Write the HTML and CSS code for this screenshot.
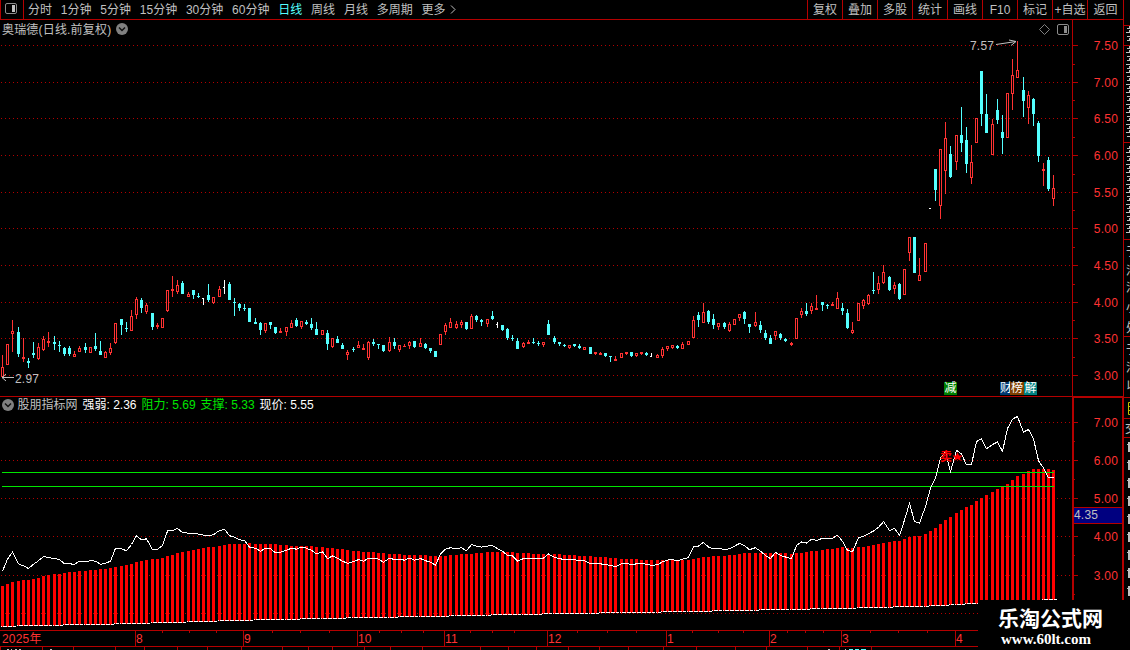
FILE: index.html
```html
<!DOCTYPE html>
<html lang="zh-CN">

<head>
    <meta charset="UTF-8">
    <meta name="viewport" content="width=device-width, initial-scale=1.0">
    <title>奥瑞德 日线</title>
    <link rel="stylesheet" href="styles.css">
</head>

<body>
    <div class="app">
        <div class="toolbar">
            <div class="side-btn">
                <svg width="12" height="11" viewBox="0 0 12 11">
                    <rect x="0.5" y="0.5" width="11" height="10" rx="1.5" fill="none" stroke="#8c8c8c" />
                    <rect x="7" y="2" width="3" height="7" fill="#c0c0c0" />
                </svg>
            </div>
            <div class="periods">
                <span>分时</span>
                <span>1分钟</span>
                <span>5分钟</span>
                <span>15分钟</span>
                <span>30分钟</span>
                <span>60分钟</span>
                <span class="on">日线</span>
                <span>周线</span>
                <span>月线</span>
                <span>多周期</span>
                <span>更多<svg class="more" width="6" height="9" viewBox="0 0 6 9"><path d="M1 0.5L5 4.5L1 8.5" fill="none" stroke="#c0c0c0" /></svg></span>
            </div>
            <div class="tools">
                <span>复权</span>
                <span>叠加</span>
                <span>多股</span>
                <span>统计</span>
                <span>画线</span>
                <span>F10</span>
                <span>标记</span>
                <span>+自选</span>
                <span class="last">返回</span>
            </div>
        </div>

        <div class="panel kline">
            <svg id="kline" width="1130" height="377" viewBox="0 20 1130 377"></svg>
            <div class="title">
                <span class="stock">奥瑞德(日线.前复权)</span>
                <svg class="drop" width="12" height="12" viewBox="0 0 12 12">
                    <circle cx="6" cy="6" r="6" fill="#808080" />
                    <path d="M3 4.5L6 7.5L9 4.5" fill="none" stroke="#101010" stroke-width="1.5" />
                </svg>
            </div>
            <div class="marks">
                <span class="mark green">减</span>
                <span class="mark navy">财</span>
                <span class="mark brown">榜</span>
                <span class="mark teal">解</span>
            </div>
        </div>

        <div class="panel indicator">
            <svg id="indicator" width="1130" height="253" viewBox="0 397 1130 253"></svg>
            <div class="title">
                <svg class="drop" width="12" height="12" viewBox="0 0 12 12">
                    <circle cx="6" cy="6" r="6" fill="#808080" />
                    <path d="M3 4.5L6 7.5L9 4.5" fill="none" stroke="#101010" stroke-width="1.5" />
                </svg>
                <span>股朋指标网</span>
                <span class="white">强弱: 2.36</span>
                <span class="lime">阻力: 5.69</span>
                <span class="lime">支撑: 5.33</span>
                <span class="white">现价: 5.55</span>
            </div>
            <div class="logo">
                <p class="name">乐淘公式网</p>
                <p class="url">www.60lt.com</p>
            </div>
        </div>
    </div>
    <script src="chart.js"></script>
</body>

</html>
```
FILE: styles.css
```css
* {
    padding: 0;
    margin: 0;
    box-sizing: border-box;
}

body {
    background: #000;
    color: #c0c0c0;
    font: 12px/14px "Liberation Sans", "Noto Sans CJK SC", sans-serif;
    overflow: hidden;
}

svg {
    display: block;
}

.app {
    width: 1130px;
    height: 650px;
    display: flex;
    flex-direction: column;
}

.toolbar {
    display: flex;
    width: 1124px;
    height: 20px;
    border-bottom: 1px solid #b40000;
    border-right: 1px solid #b40000;
    white-space: nowrap;
}

.side-btn {
    width: 24px;
    padding: 3px 0 0 4px;
    border-left: 1px solid #b40000;
    border-right: 1px solid #b40000;
}

.periods {
    display: flex;
    gap: 8.8px;
    padding: 3px 0 0 4px;
}

.periods .on {
    color: #54ffff;
}

.more {
    display: inline-block;
    margin-left: 4px;
}

.tools {
    display: flex;
    margin-left: auto;
}

.tools span {
    width: 35px;
    padding-top: 3px;
    border-left: 1px solid #b40000;
    text-align: center;
}

.tools .last {
    width: 36px;
}

.panel {
    position: relative;
}

.kline {
    height: 377px;
}

.indicator {
    height: 253px;
}

.title {
    position: absolute;
    left: 2px;
    top: 3px;
    display: flex;
    gap: 5px;
    white-space: nowrap;
}

.stock {
    letter-spacing: 0.18px;
}

.indicator .title {
    top: 1px;
}

.drop {
    margin-top: 1px;
}

.kline .drop {
    margin-top: 0;
}

.indicator .title .drop {
    margin-right: -1.5px;
}

.white {
    color: #fff;
}

.lime {
    color: #00e600;
}

.marks {
    position: absolute;
    left: 944px;
    top: 362px;
    display: flex;
}

.mark {
    width: 13px;
    height: 13px;
    color: #fff;
    line-height: 13px;
    text-align: center;
}

.green {
    background: #008000;
    margin-right: 43px;
}

.navy {
    width: 10px;
    background: #003870;
    text-align: left;
}

.brown {
    width: 14px;
    background: #804000;
}

.teal {
    background: #008080;
}

.logo {
    position: absolute;
    left: 978px;
    top: 203px;
    width: 152px;
    height: 50px;
    padding: 7px 0 0 20px;
    background: #000;
    color: #fff;
}

.logo .name {
    font: bold 21px/21px "Noto Sans CJK SC", sans-serif;
}

.logo .url {
    padding: 3px 0 0 3px;
    font: bold 15px/16px "Liberation Serif", serif;
}

text {
    font: 12px "Liberation Sans", "Noto Sans CJK SC", sans-serif;
}

.price {
    letter-spacing: 0.2px;
}

.sell {
    font-weight: bold;
}
```
FILE: chart.js
```js
var NS = "http://www.w3.org/2000/svg";
var RED = "#ff3232";
var CYAN = "#54ffff";
var LINE = "#b40000";

// type, high, body top, body bottom, low (screen y)
var candles = "r355,367,377,377 r344,344,365,365 r320,331,334,352 c327,332,354,357 r338,357,359,362 c358,361,363,368 c342,353,355,358 r343,347,359,360 r336,339,350,351 r332,341,343,347 " +
    "c336,342,344,350 c341,345,346,352 c347,348,354,356 c346,348,354,356 r351,354,357,357 r346,348,352,352 c343,347,350,353 r347,347,353,353 c333,346,349,351 c341,351,355,355 " +
    "r351,352,358,358 r343,348,353,355 r323,323,343,344 c319,319,325,335 c322,328,329,332 r310,316,331,331 r297,299,315,319 c298,300,308,313 r303,305,312,314 c313,313,327,330 " +
    "r323,325,327,329 r318,318,328,328 r290,290,311,312 r276,289,291,297 r280,285,292,294 c281,283,294,294 r292,294,297,297 c290,290,295,299 c293,296,297,298 w298,298,299,305 " +
    "c284,295,300,302 r297,297,303,304 r286,289,297,297 w280,287,288,294 c282,284,300,300 c298,302,303,316 c303,304,308,311 c304,308,309,311 c308,308,322,322 c318,322,324,324 " +
    "c322,323,330,335 r323,323,331,333 c322,322,325,329 c327,327,333,334 r328,331,333,333 r327,327,332,336 r320,323,328,328 c318,320,326,327 r321,321,327,329 c320,322,324,325 " +
    "c318,324,328,330 c322,329,335,335 r330,330,335,335 c330,333,344,350 r338,338,347,348 c336,339,343,343 c343,345,349,349 r350,352,355,360 c347,349,350,352 r341,345,348,348 " +
    "r344,348,350,350 r341,342,358,360 c339,342,344,346 c344,344,345,349 c345,345,351,352 r337,342,351,352 c338,342,346,349 r345,345,350,352 r344,346,347,347 r341,342,346,349 " +
    "c341,341,347,348 r338,343,347,347 c343,344,348,349 c348,348,351,353 c351,351,357,357 r334,334,345,345 r323,325,332,335 r318,322,328,328 r321,324,328,329 r320,322,325,328 " +
    "c322,322,329,330 r314,316,329,329 c315,316,320,322 c319,320,322,326 r319,319,324,327 c311,316,319,320 w322,324,325,328 c325,325,330,331 c328,329,338,340 c335,338,339,341 " +
    "c338,341,349,349 r342,343,347,348 r340,342,344,344 c338,342,343,344 c341,343,344,346 r342,342,345,347 c320,324,335,335 c336,338,342,344 c342,342,344,346 c344,345,346,347 " +
    "r345,345,348,349 c344,344,346,347 c344,346,348,349 r347,347,350,350 c347,347,354,354 r352,352,354,355 r352,353,355,355 c353,353,356,357 c356,356,357,362 r356,359,361,361 " +
    "r353,353,358,358 r352,352,354,355 c352,352,356,357 r353,353,356,357 r352,352,354,355 c352,353,355,356 w353,356,357,357 r354,355,358,358 r347,349,356,358 r346,346,349,351 " +
    "r345,345,348,349 c345,346,348,349 r342,344,349,349 r341,341,345,345 r316,320,338,338 c312,315,320,327 r303,312,323,323 c310,311,322,324 c314,319,325,329 r323,323,327,330 " +
    "c322,323,327,329 r322,324,331,332 r319,319,325,325 r314,314,318,321 c311,312,319,324 c324,324,327,333 r312,322,326,327 c321,325,330,333 c330,333,338,340 c335,338,344,344 " +
    "r331,331,336,340 c333,334,338,340 c338,339,341,342 r342,343,345,346 r318,318,339,339 r308,311,315,318 c303,311,314,316 r303,306,311,314 r295,308,310,310 c302,302,305,311 " +
    "c304,305,306,309 r302,304,306,306 r292,298,309,309 c303,308,311,315 c309,313,328,329 r322,330,333,334 r303,303,321,321 r299,300,306,309 r294,295,304,305 c272,290,291,294 " +
    "r276,283,290,294 r265,272,283,284 c276,277,290,291 r282,285,289,294 c283,284,299,300 r269,269,295,295 r237,237,253,261 c237,237,273,273 r258,275,281,281 r243,243,272,272 " +
    "w208,208,209,209 c169,169,190,201 r149,149,206,219 r122,138,171,194 c146,154,177,178 r135,135,162,170 c107,135,143,152 c127,140,164,173 r145,162,178,184 r118,118,143,143 " +
    "c71,71,114,126 c94,114,133,133 r119,124,155,155 c99,110,120,124 c115,132,138,154 r93,93,138,138 r59,75,94,110 r41,70,78,78 c77,90,101,117 r91,95,108,124 " +
    "c98,99,114,126 c121,123,156,162 r163,169,171,186 c157,160,189,191 r175,188,199,206";

// top of the indicator columns: [first column, y]
var tops = [[0, 586], [1, 584], [2, 582], [3, 581], [4, 580], [6, 579], [7, 578], [8, 576], [9, 575], [10, 574], [12, 573], [13, 572], [15, 571], [17, 570], [19, 569],
    [21, 568], [22, 567], [23, 566], [24, 565], [25, 564], [26, 562], [27, 561], [28, 560], [29, 559], [31, 558], [32, 556], [33, 555], [34, 553], [35, 552], [36, 551],
    [37, 550], [38, 549], [39, 548], [40, 547], [42, 546], [43, 545], [44, 544], [48, 543], [49, 544], [54, 545], [56, 546], [61, 547], [63, 548], [65, 549], [67, 550],
    [68, 551], [70, 552], [73, 553], [75, 554], [78, 555], [83, 556], [87, 555], [89, 554], [92, 553], [94, 552], [100, 553], [103, 554], [109, 555], [112, 556],
    [115, 557], [118, 558], [120, 559], [124, 560], [134, 559], [135, 558], [136, 557], [138, 556], [141, 555], [143, 554], [144, 553], [153, 554], [154, 553],
    [156, 552], [157, 551], [159, 550], [160, 549], [162, 548], [163, 547], [164, 548], [166, 547], [168, 546], [169, 545], [170, 544], [171, 543], [172, 542],
    [173, 541], [175, 539], [176, 537], [177, 536], [179, 534], [180, 531], [181, 528], [182, 524], [183, 520], [184, 517], [185, 513], [186, 510], [187, 507],
    [188, 505], [189, 501], [190, 498], [191, 495], [192, 492], [193, 489], [194, 487], [195, 484], [196, 480], [197, 476], [198, 474], [199, 471], [200, 469], [204, 470]];

// x where the base line rises by one pixel, starting from 626
var steps = [15, 62, 113, 148, 183, 215, 250, 299, 345, 397, 448, 490, 541, 597, 660, 710, 760, 809, 855, 893, 928, 948, 965, 985, 1005, 1020, 1040];

function add(svg, tag, attrs, text) {
    var el = document.createElementNS(NS, tag);
    for (var k in attrs) {
        el.setAttribute(k, attrs[k]);
    }
    if (text) {
        el.textContent = text;
    }
    svg.appendChild(el);
    return el;
}

function rect(svg, x, y, w, h, fill) {
    add(svg, "rect", { x: x, y: y, width: w, height: h, fill: fill });
}

function path(svg, d, stroke, width) {
    return add(svg, "path", { d: d, fill: "none", stroke: stroke, "stroke-width": width || 1 });
}

function barX(i) {
    return Math.floor(2.57 + i * 67 / 13);
}

function gridLine(svg, y) {
    for (var x = 1; x < 1072; x += 4) {
        rect(svg, x, y, 1, 1, LINE);
    }
}

function label(svg, x, y, text, fill, anchor, cls) {
    add(svg, "text", { x: x, y: y, fill: fill, "text-anchor": anchor || "start", "class": cls || "price" }, text);
}

var data = candles.split(" ").map(function (s) {
    var v = s.slice(1).split(",").map(Number);
    return { type: s[0], high: v[0], top: v[1], bottom: v[2], low: v[3] };
});

// K线
var k = document.getElementById("kline");
var kTicks = [45, 82, 118, 155, 192, 228, 265, 302, 338, 375];
kTicks.forEach(function (y, i) {
    gridLine(k, y);
    rect(k, 1073, y, 5, 1, LINE);
    if (i < 9) {
        rect(k, 1073, Math.round((y + kTicks[i + 1]) / 2), 2, 1, LINE);
    }
    label(k, 1118, y + 5, (7.5 - i * 0.5).toFixed(2), RED, "end");
});

data.forEach(function (d, i) {
    var x = barX(i);
    if (d.type == "r") {
        rect(k, x, d.high, 1, d.top - d.high, RED);
        rect(k, x, d.bottom, 1, d.low - d.bottom, RED);
        rect(k, x - 1, d.top, 3, d.bottom - d.top, RED);
        if (d.bottom - d.top > 2) {
            rect(k, x, d.top + 1, 1, d.bottom - d.top - 2, "#000");
        }
    } else if (d.type == "c") {
        rect(k, x, d.high, 1, d.low - d.high, CYAN);
        rect(k, x - 1, d.top, 3, d.bottom - d.top, CYAN);
    } else {
        rect(k, x, d.high, 1, d.low - d.high, "#fff");
        rect(k, x - 1, d.top, 2, 1, "#fff");
    }
});

rect(k, 1072, 20, 1, 377, LINE);
rect(k, 1123, 20, 1, 377, LINE);
rect(k, 0, 396, 1124, 1, LINE);
label(k, 970, 50, "7.57", "#c0c0c0");
path(k, "M996 44.5L1016 41.5M1009 40L1016 41.5L1011 45.5", "#c0c0c0");
label(k, 15, 383, "2.97", "#c0c0c0");
path(k, "M14 377.5H2M6 374L2 377.5L6 381", "#c0c0c0");
path(k, "M1044.5 24.5L1049.5 29.5L1044.5 34.5L1039.5 29.5Z", "#808080");
add(k, "rect", { x: 1057.5, y: 24.5, width: 11, height: 10, rx: 1.5, fill: "none", stroke: "#8c8c8c" });
rect(k, 1064, 26, 3, 7, "#8c8c8c");

// 右侧边栏
[25, 45, 142, 239, 336].forEach(function (y) {
    rect(k, 1124, y, 6, 1, LINE);
});
for (var y = 28; y < 236; y += 4) {
    var n = (y / 4) % 5;
    if (Math.abs(y - 142) > 3 && Math.abs(y - 45) > 2) {
        rect(k, n % 2 ? 1126 : 1127, y, n % 2 ? 4 : 3, 1, "#c0c0c0");
        if (n != 1 && n != 4) {
            rect(k, 1129, y - 2, 1, 2, "#c0c0c0");
        }
    }
}
["于", "沿", "沿", "小", "处", "于", "沿", "以"].forEach(function (c, i) {
    label(k, 1126, [256, 275, 292, 312, 332, 354, 372, 390][i], c, "#c0c0c0");
});

// 副图
var s = document.getElementById("indicator");
var sTicks = [422, 460, 498, 536, 575, 613];
sTicks.forEach(function (y, i) {
    gridLine(s, y);
    if (i < 5) {
        rect(s, 1074, y, 4, 1, LINE);
        rect(s, 1074, y + 19, 1, 1, LINE);
        label(s, 1118, y + 5, (7 - i).toFixed(2), RED, "end");
    }
});

var base = 626;
var colTop = 0;
var t = 0;
var points = [];
data.forEach(function (d, i) {
    var x = barX(i);
    while (t < tops.length && tops[t][0] <= i) {
        colTop = tops[t][1];
        t++;
    }
    while (steps.length && steps[0] <= x) {
        steps.shift();
        base--;
    }
    rect(s, x - 1, colTop, 3, base - colTop + 1, "#f00");
    rect(s, x + 1, base, 3, 1, "#fff");
    rect(s, x - 1, base, 1, 1, "#fff");
    points.push((x + 0.5) + "," + (403.5 + ((d.type == "r" ? d.top : d.bottom - 1) - 45) * 0.5204).toFixed(1));
});

rect(s, 2, 472, 1052, 1, "#00e600");
rect(s, 2, 486, 1052, 1, "#00e600");
add(s, "polyline", { points: points.join(" "), fill: "none", stroke: "#fff", "shape-rendering": "crispEdges" });
label(s, 940, 461, "卖", "#f00", "start", "sell");
add(s, "path", { d: "M957.5 452L959 455.5H962.5L960 458L961 461L957.5 459L954 461L955 458L952.5 455.5H956Z", fill: "#f00" });

rect(s, 1072, 397, 2, 253, LINE);
rect(s, 1122, 397, 2, 253, LINE);
rect(s, 1072, 397, 52, 1, LINE);
rect(s, 1074, 507, 48, 17, LINE);
rect(s, 1074, 508, 48, 15, "#000080");
label(s, 1074, 519, "4.35", "#c0c0c0");

// 时间轴
rect(s, 0, 630, 1072, 1, LINE);
rect(s, 0, 646, 1072, 1, LINE);
label(s, 2, 643, "2025年", RED);
[[135, "8"], [243, "9"], [357, "10"], [444, "11"], [547, "12"], [666, "1"], [769, "2"], [841, "3"], [955, "4"]].forEach(function (m) {
    rect(s, m[0], 630, 1, 16, LINE);
    label(s, m[0] + 1, 643, m[1], RED);
});
[162, 189, 216, 272, 300, 329, 379, 401, 423, 470, 492, 514, 577, 607, 636, 692, 718, 743, 787, 805, 823, 870, 898, 927].forEach(function (x) {
    rect(s, x, 631, 1, 2, LINE);
});
[0, 42, 73, 115, 144, 177, 207, 241, 282, 308, 332, 364, 390, 422, 480, 508, 536, 568, 599, 628, 663, 696, 735, 766, 807, 839, 871].forEach(function (x) {
    rect(s, x, 647, 1, 3, LINE);
});
// 底部下一行露出的部分
[[7, 2], [11, 1], [15, 2], [19, 2], [50, 2], [828, 2], [845, 1]].forEach(function (b) {
    rect(s, b[0], 649, b[1], 1, "#c0c0c0");
});
[[849, 4], [855, 4], [861, 5]].forEach(function (b) {
    rect(s, b[0], 649, b[1], 1, CYAN);
});

// 侧边栏下半部分
[397, 418, 437].forEach(function (y) {
    rect(s, 1124, y, 6, 1, LINE);
});
path(s, "M1130 402.5H1128.5V414.5H1130M1128 406.5H1130M1128 410.5H1130", "#c0c000");
label(s, 1125, 433, "交", "#c0c0c0");
for (var j = 0; j < 9; j++) {
    rect(s, 1127, 444 + j * 18, 1, 1, "#c0c0c0");
    rect(s, 1128, 442 + j * 18, 2, 10, "#c0c0c0");
}
```
